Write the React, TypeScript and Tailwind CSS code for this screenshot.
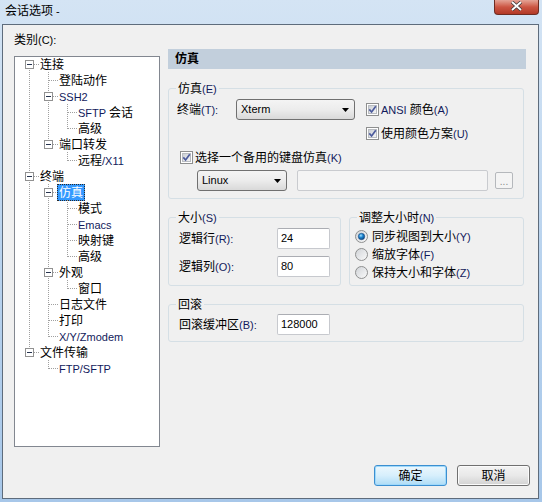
import React from 'react';

const CJK = /([\u3000-\u9fff\uff00-\uffef]+)/;
const NAVY = 'text-[#121a5c]';
const DOT = '#a0a0a0';

// split text into CJK runs (12px) and latin runs (11px, like Tahoma beside SimSun)
function T({ s, latin = '' }: { s: string; latin?: string }) {
  const parts = s.split(CJK).filter((p) => p !== '');
  return (
    <>
      {parts.map((p, i) =>
        /[\u3000-\u9fff\uff00-\uffef]/.test(p) ? (
          <span key={i} className="text-[12px]">
            {p}
          </span>
        ) : (
          <span key={i} className={`text-[11px] ${latin}`}>
            {p}
          </span>
        )
      )}
    </>
  );
}

type Node = { t: string; l: number; exp?: boolean; sel?: boolean };

const tree: Node[] = [
  { t: '连接', l: 0, exp: true },
  { t: '登陆动作', l: 1 },
  { t: 'SSH2', l: 1, exp: true },
  { t: 'SFTP 会话', l: 2 },
  { t: '高级', l: 2 },
  { t: '端口转发', l: 1, exp: true },
  { t: '远程/X11', l: 2 },
  { t: '终端', l: 0, exp: true },
  { t: '仿真', l: 1, exp: true, sel: true },
  { t: '模式', l: 2 },
  { t: 'Emacs', l: 2 },
  { t: '映射键', l: 2 },
  { t: '高级', l: 2 },
  { t: '外观', l: 1, exp: true },
  { t: '窗口', l: 2 },
  { t: '日志文件', l: 1 },
  { t: '打印', l: 1 },
  { t: 'X/Y/Zmodem', l: 1 },
  { t: '文件传输', l: 0, exp: true },
  { t: 'FTP/SFTP', l: 1 },
];

function hasNext(i: number) {
  const l = tree[i].l;
  for (let j = i + 1; j < tree.length; j++) {
    if (tree[j].l < l) return false;
    if (tree[j].l === l) return true;
  }
  return false;
}

function ancestorContinues(i: number, k: number) {
  for (let j = i - 1; j >= 0; j--) if (tree[j].l === k) return hasNext(j);
  return false;
}

function Guide({ on }: { on: boolean }) {
  return (
    <svg width="19" height="16" className="shrink-0">
      {on && <line x1="9.5" y1="0" x2="9.5" y2="16" stroke={DOT} strokeDasharray="1 1" />}
    </svg>
  );
}

function Joint({ top, bottom, exp }: { top: boolean; bottom: boolean; exp?: boolean }) {
  return (
    <svg width="19" height="16" className="shrink-0">
      {top && <line x1="9.5" y1="0" x2="9.5" y2="9" stroke={DOT} strokeDasharray="1 1" />}
      {bottom && <line x1="9.5" y1="8" x2="9.5" y2="16" stroke={DOT} strokeDasharray="1 1" />}
      <line x1="10" y1="8.5" x2="19" y2="8.5" stroke={DOT} strokeDasharray="1 1" />
      {exp && (
        <>
          <rect x="5.5" y="4.5" width="8" height="8" fill="#fff" stroke="#919191" />
          <line x1="7" y1="8.5" x2="12" y2="8.5" stroke="#26344f" />
        </>
      )}
    </svg>
  );
}

function TreeRow({ n, i }: { n: Node; i: number }) {
  const guides = Array.from({ length: n.l }, (_, k) => ancestorContinues(i, k));
  return (
    <div className="flex h-4 items-center leading-4 whitespace-nowrap">
      {guides.map((on, k) => (
        <Guide key={k} on={on} />
      ))}
      <Joint top={i !== 0} bottom={hasNext(i)} exp={n.exp} />
      {n.sel ? (
        <span className="-ml-[1px] border border-dotted border-[#2a2a2a] bg-[#3399ff] px-[1px] leading-[14px] text-white">
          <T s={n.t} />
        </span>
      ) : (
        <span className="px-[1px]">
          <T s={n.t} latin={NAVY} />
        </span>
      )}
    </div>
  );
}

function Check() {
  return (
    <svg width="13" height="13" className="shrink-0">
      <defs>
        <linearGradient id="cbg" x1="0" y1="0" x2="1" y2="1">
          <stop offset="0" stopColor="#c9cdd3" />
          <stop offset="1" stopColor="#f7f7f7" />
        </linearGradient>
      </defs>
      <rect x="0.5" y="0.5" width="12" height="12" fill="#fff" stroke="#8e8f8f" />
      <rect x="2.5" y="2.5" width="8" height="8" fill="url(#cbg)" stroke="#b9bcc1" />
      <path d="M3.3 6.4 L5.6 9 L9.8 3.3" fill="none" stroke="#4b5a9c" strokeWidth="1.7" />
    </svg>
  );
}

function Radio({ on }: { on?: boolean }) {
  return (
    <svg width="13" height="13" className="shrink-0">
      <defs>
        <linearGradient id="rbg" x1="0" y1="0" x2="1" y2="1">
          <stop offset="0" stopColor="#cfd2d6" />
          <stop offset="1" stopColor="#fbfbfb" />
        </linearGradient>
        <radialGradient id="rdot" cx="0.4" cy="0.35" r="0.7">
          <stop offset="0" stopColor="#a6e0ff" />
          <stop offset="0.45" stopColor="#1b84cf" />
          <stop offset="1" stopColor="#0c3f78" />
        </radialGradient>
      </defs>
      <circle cx="6.5" cy="6.5" r="6" fill="url(#rbg)" stroke="#8e8f8f" />
      {on && <circle cx="6.5" cy="6.5" r="3.2" fill="url(#rdot)" stroke="#1c4a80" strokeWidth="0.6" />}
    </svg>
  );
}

function Combo({ v, w }: { v: string; w: string }) {
  return (
    <div
      className={`flex h-[21px] shrink-0 items-center justify-between rounded-[3px] border border-[#707070] bg-linear-to-b from-[#f4f4f4] via-[#ececec] to-[#d9d9d9] pl-[4px] pr-[5px] ${w}`}
    >
      <span className="text-[11px]">{v}</span>
      <svg width="7" height="4">
        <path d="M0 0h7L3.5 4z" fill="#000" />
      </svg>
    </div>
  );
}

function Field({ v, w }: { v: string; w: string }) {
  return (
    <div
      className={`flex h-[21px] shrink-0 items-center rounded-[2px] border border-[#c7c9ce] border-t-[#abadb3] bg-white pl-[3px] ${w}`}
    >
      <span className="text-[11px]">{v}</span>
    </div>
  );
}

function Legend({ s }: { s: string }) {
  return (
    <legend className="ml-[7px] px-[2px] leading-4">
      <T s={s} latin={NAVY} />
    </legend>
  );
}

export default function App() {
  return (
    <div className="flex h-[502px] w-[542px] flex-col overflow-hidden bg-linear-to-b from-[#d4e4f4] via-[#b9d3ee] to-[#a7c7e9] font-['Liberation_Sans','Noto_Sans_CJK_SC',sans-serif] text-black">
      {/* title bar */}
      <div className="flex h-[24px] shrink-0 items-start justify-between">
        <div className="pl-[5px] pt-[2px] leading-4">
          <T s="会话选项 -" />
        </div>
        <div className="mr-[3px] flex h-[15px] w-[45px] items-start justify-center rounded-b-[4px] border border-t-0 border-[#6e2c22] bg-linear-to-b from-[#e4a396] via-[#cc5543] to-[#b23926] pt-[1px]">
          <svg width="13" height="10">
            <path d="M2 1 L11 9 M11 1 L2 9" stroke="#3a3a3a" strokeWidth="3.4" />
            <path d="M2 1 L11 9 M11 1 L2 9" stroke="#fff" strokeWidth="1.8" />
          </svg>
        </div>
      </div>

      {/* client area */}
      <div className="ml-[2px] flex h-[475px] w-[537px] flex-col border border-[#5e6c7c] bg-[#f0f0f0]">
        <div className="flex items-start">
          {/* category tree */}
          <div className="ml-[11px] w-[146px] shrink-0">
            <div className="pt-[6px] leading-4">
              <T s="类别(C):" />
            </div>
            <div className="mt-[8px] h-[391px] overflow-hidden border border-[#828790] bg-white pl-[5px]">
              <div className="-mt-[1px]">
                {tree.map((n, i) => (
                  <TreeRow key={i} n={n} i={i} />
                ))}
              </div>
            </div>
          </div>

          {/* settings page */}
          <div className="ml-[8px] w-[358px] pt-[24px]">
            <div className="flex h-[20px] items-center bg-[#c2cfdc] pl-[7px] font-bold">
              <T s="仿真" />
            </div>

            <fieldset className="mt-[11px] w-[356px] rounded-[3px] border border-[#d5dfe5] pb-[7px]">
              <Legend s="仿真(E)" />
              <div className="pl-[8px] pt-[2px]">
                <div className="flex items-start">
                  <div className="flex h-[21px] w-[59px] shrink-0 items-center leading-4">
                    <T s="终端(T):" latin={NAVY} />
                  </div>
                  <Combo v="Xterm" w="w-[119px]" />
                  <div className="ml-[11px] flex flex-col gap-[8px] pt-[2px]">
                    <div className="flex h-4 items-center gap-[2px] leading-4">
                      <Check />
                      <span>
                        <T s="ANSI 颜色(A)" latin={NAVY} />
                      </span>
                    </div>
                    <div className="flex h-4 items-center gap-[2px] leading-4">
                      <Check />
                      <span>
                        <T s="使用颜色方案(U)" latin={NAVY} />
                      </span>
                    </div>
                  </div>
                </div>
                <div className="ml-[3px] mt-[8px] flex h-4 items-center gap-[2px] leading-4">
                  <Check />
                  <span>
                    <T s="选择一个备用的键盘仿真(K)" latin={NAVY} />
                  </span>
                </div>
                <div className="mt-[5px] flex items-center">
                  <div className="ml-[20px]">
                    <Combo v="Linux" w="w-[90px]" />
                  </div>
                  <div className="ml-[10px] h-[21px] w-[191px] shrink-0 rounded-[2px] border border-[#c9cbcf] bg-[#f4f4f4]" />
                  <div className="ml-[7px] flex h-[17px] w-[18px] shrink-0 items-end justify-center rounded-[2px] border border-[#b5b8bc] bg-[#f4f4f4] pb-[2px] text-[10px] leading-[8px] text-[#8a8a8a]">
                    ...
                  </div>
                </div>
              </div>
            </fieldset>

            <div className="mt-[10px] flex gap-[8px]">
              <fieldset className="h-[77px] w-[173px] shrink-0 rounded-[3px] border border-[#d5dfe5]">
                <Legend s="大小(S)" />
                <div className="flex flex-col gap-[7px] pl-[10px] pt-[2px]">
                  <div className="flex items-center">
                    <div className="w-[98px] shrink-0 leading-4">
                      <T s="逻辑行(R):" latin={NAVY} />
                    </div>
                    <Field v="24" w="w-[53px]" />
                  </div>
                  <div className="flex items-center">
                    <div className="w-[98px] shrink-0 leading-4">
                      <T s="逻辑列(O):" latin={NAVY} />
                    </div>
                    <Field v="80" w="w-[53px]" />
                  </div>
                </div>
              </fieldset>

              <fieldset className="h-[77px] w-[175px] shrink-0 rounded-[3px] border border-[#d5dfe5]">
                <Legend s="调整大小时(N)" />
                <div className="flex flex-col gap-[2px] pl-[5px] pt-[2px]">
                  <div className="flex h-4 items-center gap-[4px] leading-4">
                    <Radio on />
                    <span>
                      <T s="同步视图到大小(Y)" latin={NAVY} />
                    </span>
                  </div>
                  <div className="flex h-4 items-center gap-[4px] leading-4">
                    <Radio />
                    <span>
                      <T s="缩放字体(F)" latin={NAVY} />
                    </span>
                  </div>
                  <div className="flex h-4 items-center gap-[4px] leading-4">
                    <Radio />
                    <span>
                      <T s="保持大小和字体(Z)" latin={NAVY} />
                    </span>
                  </div>
                </div>
              </fieldset>
            </div>

            <fieldset className="mt-[10px] w-[356px] rounded-[3px] border border-[#d5dfe5] pb-[6px]">
              <Legend s="回滚" />
              <div className="flex items-center pl-[10px] pt-[1px]">
                <div className="w-[98px] shrink-0 leading-4">
                  <T s="回滚缓冲区(B):" latin={NAVY} />
                </div>
                <Field v="128000" w="w-[53px]" />
              </div>
            </fieldset>
          </div>
        </div>

        {/* dialog buttons */}
        <div className="mt-auto flex justify-end gap-[10px] pb-[12px] pr-[8px]">
          <button className="flex h-[21px] w-[73px] items-center justify-center rounded-[3px] border border-[#3c8fd0] bg-linear-to-b from-[#ecf7fd] via-[#d7effc] to-[#aedcf6] leading-4 shadow-[inset_0_0_0_1px_#9fd9fb]">
            <T s="确定" />
          </button>
          <button className="flex h-[21px] w-[73px] items-center justify-center rounded-[3px] border border-[#707070] bg-linear-to-b from-[#f3f3f3] via-[#e9e9e9] to-[#d2d2d2] leading-4 shadow-[inset_0_0_0_1px_#fbfbfb]">
            <T s="取消" />
          </button>
        </div>
      </div>
    </div>
  );
}
